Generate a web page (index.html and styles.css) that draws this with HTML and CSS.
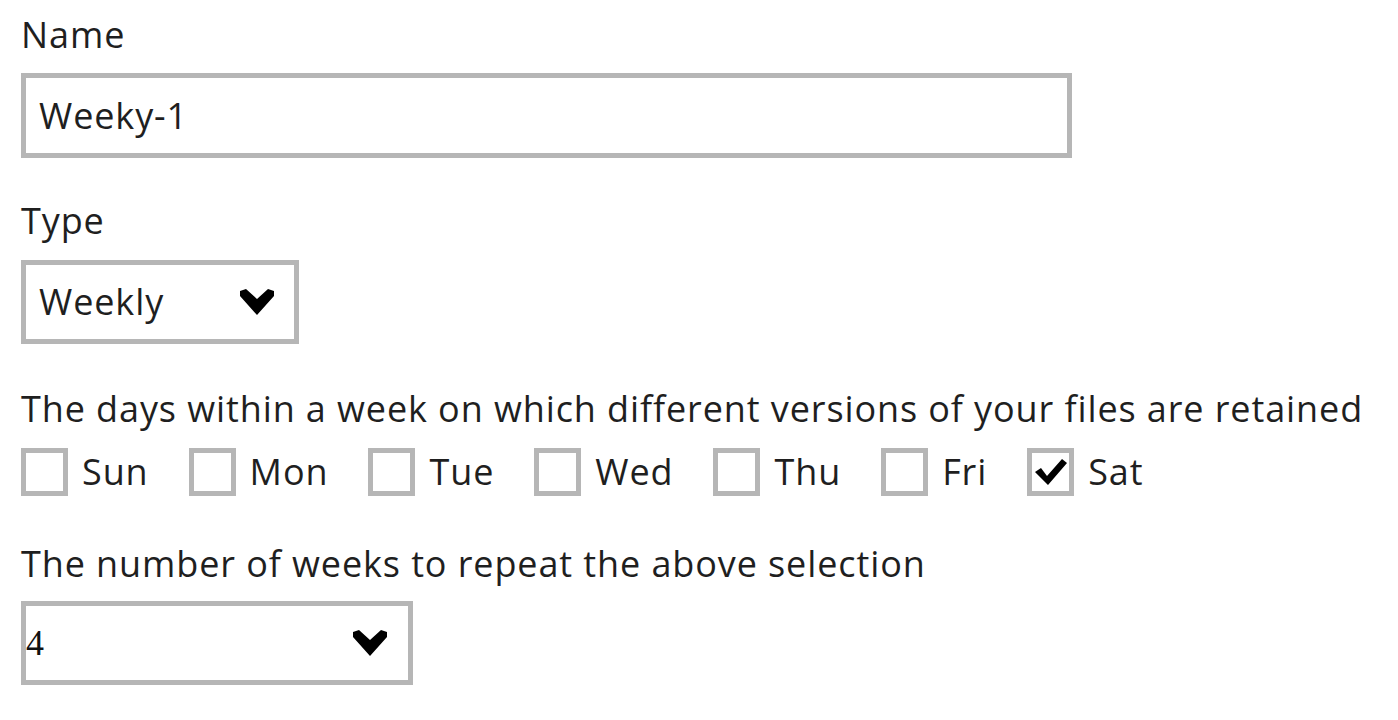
FILE: index.html
```html
<!DOCTYPE html>
<html lang="en">
<head>
<meta charset="utf-8">
<title>Retention policy</title>
<link rel="stylesheet" href="styles.css">
</head>
<body>
<form class="form">
  <div class="label label-name">Name</div>
  <div class="textbox"><span class="value">Weeky-1</span></div>

  <div class="label label-type">Type</div>
  <div class="dropdown dropdown-type">
    <span class="value">Weekly</span>
    <svg class="chevron" viewBox="0 0 34 26" width="34" height="26" aria-hidden="true"><polygon points="0,2 6,0 17,10 28,0 34,2 34,7 17,26 0,7" fill="#000"/></svg>
  </div>

  <div class="label label-days">The days within a week on which different versions of your files are retained</div>
  <div class="days">
    <div class="day"><span class="box"></span><span class="day-name">Sun</span></div>
    <div class="day"><span class="box"></span><span class="day-name">Mon</span></div>
    <div class="day"><span class="box"></span><span class="day-name">Tue</span></div>
    <div class="day"><span class="box"></span><span class="day-name">Wed</span></div>
    <div class="day"><span class="box"></span><span class="day-name">Thu</span></div>
    <div class="day"><span class="box"></span><span class="day-name">Fri</span></div>
    <div class="day"><span class="box"><svg class="check" viewBox="0 0 32 26" width="32" height="26" aria-hidden="true"><polygon points="0,13 6,9 12,17 27,0 32,4 13,26" fill="#000"/></svg></span><span class="day-name">Sat</span></div>
  </div>

  <div class="label label-weeks">The number of weeks to repeat the above selection</div>
  <div class="dropdown dropdown-weeks">
    <span class="value value-serif">4</span>
    <svg class="chevron" viewBox="0 0 34 26" width="34" height="26" aria-hidden="true"><polygon points="0,2 6,0 17,10 28,0 34,2 34,7 17,26 0,7" fill="#000"/></svg>
  </div>
</form>
</body>
</html>
```

FILE: styles.css
```css
html, body {
  margin: 0;
  padding: 0;
  background: #ffffff;
}

body {
  font-family: "Open Sans", "Noto Sans", sans-serif;
  font-size: 36px;
  letter-spacing: 0.9px;
  color: #1f1f1f;
}

.form {
  display: flex;
  flex-direction: column;
  align-items: flex-start;
  padding: 12px 0 0 21px;
}

.label {
  line-height: 46px;
  white-space: nowrap;
}

.label-name { margin: 0; }
.label-type { margin-top: 40px; }
.label-days { margin-top: 42px; }
.label-weeks { margin-top: 45px; }

.textbox,
.dropdown {
  box-sizing: border-box;
  border: 5px solid #b6b6b6;
  background: #fff;
  display: flex;
  align-items: center;
}

.textbox {
  width: 1051px;
  height: 85px;
  margin-top: 15px;
  padding-left: 13px;
}

.value {
  line-height: 46px;
}

.dropdown {
  height: 84px;
  justify-content: space-between;
  padding-left: 13px;
  padding-right: 20px;
}

.dropdown-type {
  width: 278px;
  margin-top: 16px;
}

.dropdown-weeks {
  width: 392px;
  margin-top: 14px;
  padding-left: 0;
  padding-right: 21px;
}

.value-serif {
  font-family: "Liberation Serif", serif;
  font-size: 36px;
  letter-spacing: 0;
  color: #111;
}

.chevron {
  display: block;
  flex: none;
}

.days {
  display: flex;
  gap: 40px;
  margin-top: 16px;
  height: 48px;
}

.day {
  display: flex;
  align-items: center;
  gap: 14px;
}

.box {
  box-sizing: border-box;
  width: 47px;
  height: 48px;
  border: 5px solid #b6b6b6;
  background: #fff;
  display: flex;
  align-items: center;
  justify-content: center;
}

.check {
  display: block;
}

.day-name {
  line-height: 46px;
}
```
